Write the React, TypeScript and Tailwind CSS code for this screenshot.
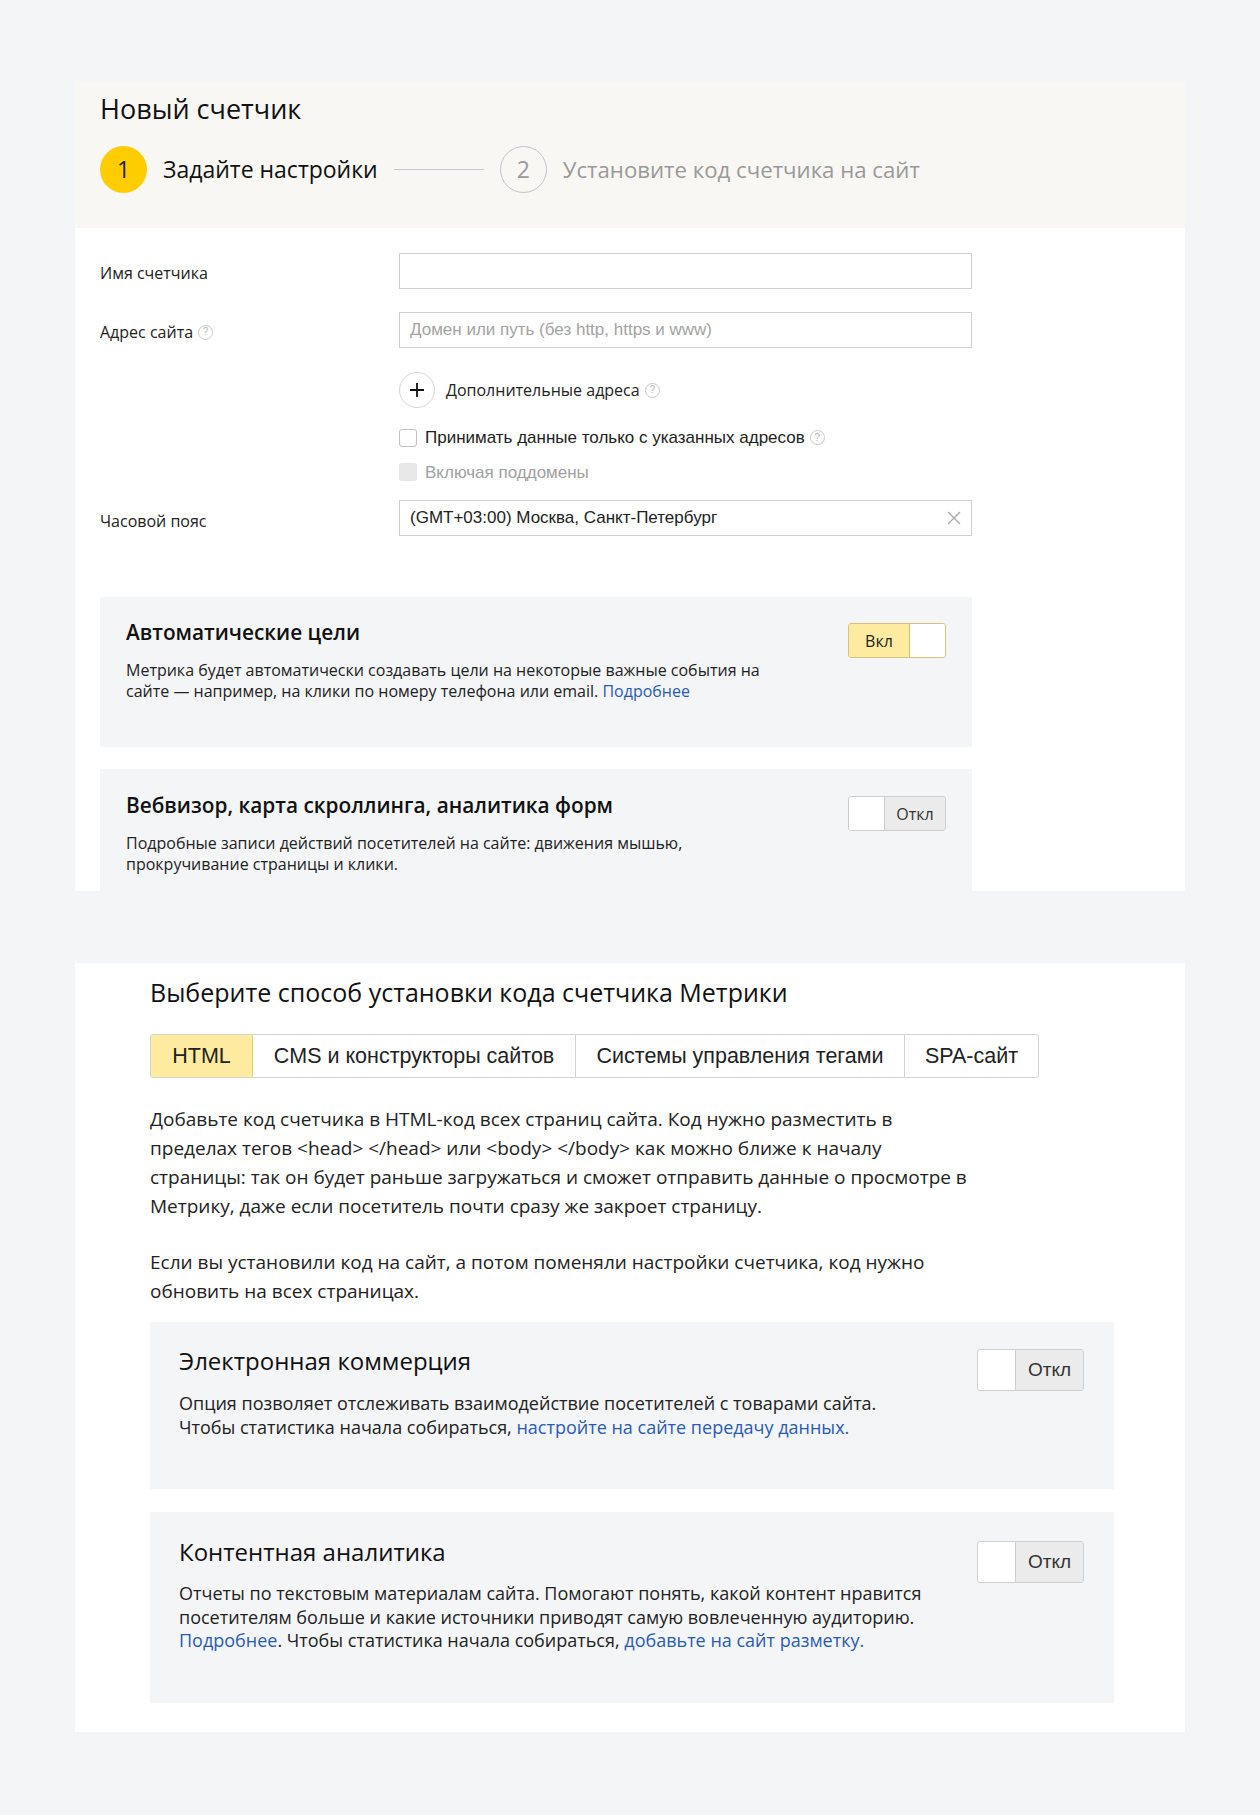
import React from "react";

const ys = "font-['Open_Sans','Noto_Sans',sans-serif]";
const ar = "font-['Liberation_Sans',Arial,sans-serif]";

function Q() {
  return (
    <span className={`inline-flex items-center justify-center w-[15px] h-[15px] rounded-full border border-[#c8c8c8] text-[10px] leading-none text-[#b5b5b5] ${ar} ml-[5px] align-middle`}>
      ?
    </span>
  );
}

function ToggleOn() {
  return (
    <div className="flex w-[98px] h-[35px] rounded-[3px] border border-[#d4c27c] overflow-hidden shrink-0">
      <div className={`flex-1 bg-[#ffeba0] flex items-center justify-center text-[16px] text-[#222] ${ys}`}>Вкл</div>
      <div className="w-[36px] bg-white border-l border-[#d4c27c]" />
    </div>
  );
}

function ToggleOff({ big }: { big?: boolean }) {
  return (
    <div
      className={`flex rounded-[3px] border border-[#cfcfcf] overflow-hidden shrink-0 ${big ? "w-[107px] h-[42px]" : "w-[98px] h-[35px]"}`}
    >
      <div className={`${big ? "w-[38px]" : "w-[36px]"} bg-white border-r border-[#cfcfcf]`} />
      <div
        className={`flex-1 bg-[#ebebeb] flex items-center justify-center text-[#333] ${big ? `text-[19px] ${ar}` : `text-[16px] ${ys}`}`}
      >
        Откл
      </div>
    </div>
  );
}

export default function App() {
  return (
    <div className="min-h-[1815px] bg-[#f3f5f7] pt-[81px] pb-[83px]">
      {/* Card 1 */}
      <div className="ml-[75px] w-[1110px] h-[810px] bg-white overflow-hidden">
        <div className="bg-[#f8f7f4] h-[147px] pl-[25px] pt-[12px]">
          <div className={`text-[27px] leading-[32px] text-[#111] ${ys}`}>Новый счетчик</div>
          <div className="flex items-center mt-[21px]">
            <div className={`w-[47px] h-[47px] rounded-full bg-[#ffcc00] flex items-center justify-center text-[23px] text-[#222] ${ys}`}>1</div>
            <div className={`ml-[16px] text-[23px] text-[#111] ${ys}`}>Задайте настройки</div>
            <div className="w-[90px] h-px bg-[#c9c9c9] mx-[16px]" />
            <div className={`w-[47px] h-[47px] rounded-full border border-[#c4c4c4] flex items-center justify-center text-[23px] text-[#9a9a9a] ${ys}`}>2</div>
            <div className={`ml-[16px] text-[22.2px] text-[#999] ${ys}`}>Установите код счетчика на сайт</div>
          </div>
        </div>

        <div className="pl-[25px] pt-[25px]">
          {/* row 1 */}
          <div className="flex items-center">
            <div className={`w-[299px] text-[16px] text-[#222] ${ys} pt-[4px]`}>Имя счетчика</div>
            <div className="w-[573px] h-[36px] border border-[#d0d0d0] bg-white" />
          </div>
          {/* row 2 */}
          <div className="flex items-center mt-[23px]">
            <div className={`w-[299px] text-[16px] text-[#222] ${ys} pt-[4px] flex items-center`}>
              Адрес сайта <Q />
            </div>
            <div className={`w-[573px] h-[36px] border border-[#d0d0d0] bg-white flex items-center px-[10px] text-[17px] text-[#a3a3a3] ${ar}`}>
              Домен или путь (без http, https и www)
            </div>
          </div>
          {/* extra */}
          <div className="ml-[299px] mt-[24px] flex items-center">
            <div className="w-[36px] h-[36px] rounded-full border border-[#d6d6d6] flex items-center justify-center bg-white">
              <svg width="16" height="16" viewBox="0 0 16 16">
                <path d="M8 1v14M1 8h14" stroke="#111" strokeWidth="1.8" />
              </svg>
            </div>
            <div className={`ml-[11px] text-[16px] text-[#222] ${ys} flex items-center`}>
              Дополнительные адреса <Q />
            </div>
          </div>
          <div className="ml-[299px] mt-[17px] flex items-center">
            <div className="w-[18px] h-[18px] rounded-[3px] border border-[#c2c2c2] bg-white" />
            <div className={`ml-[8px] text-[17px] text-[#222] ${ar} flex items-center`}>
              Принимать данные только с указанных адресов <Q />
            </div>
          </div>
          <div className="ml-[299px] mt-[9px] flex items-center">
            <div className="w-[18px] h-[18px] rounded-[3px] bg-[#e8e8e8]" />
            <div className={`ml-[8px] text-[17px] text-[#a0a0a0] ${ar}`}>Включая поддомены</div>
          </div>
          {/* timezone */}
          <div className="flex items-center mt-[15px]">
            <div className={`w-[299px] text-[16px] text-[#222] ${ys} pt-[6px]`}>Часовой пояс</div>
            <div className={`w-[573px] h-[36px] border border-[#d0d0d0] bg-white flex items-center justify-between pl-[10px] pr-[10px] text-[17px] text-[#222] ${ar}`}>
              <span>(GMT+03:00) Москва, Санкт-Петербург</span>
              <svg width="14" height="14" viewBox="0 0 14 14">
                <path d="M1 1l12 12M13 1L1 13" stroke="#a8a8a8" strokeWidth="1.3" />
              </svg>
            </div>
          </div>

          {/* panel 1 */}
          <div className="mt-[61px] w-[872px] h-[150px] bg-[#f4f5f7] flex justify-between pl-[26px] pr-[26px] pt-[21px]">
            <div>
              <div className={`text-[20.8px] leading-[28px] font-semibold text-[#111] ${ys}`}>Автоматические цели</div>
              <div className={`mt-[14px] text-[16px] leading-[21px] text-[#222] ${ys}`}>
                Метрика будет автоматически создавать цели на некоторые важные события на
                <br />
                сайте — например, на клики по номеру телефона или email.{" "}
                <span className="text-[#2a5bb0]">Подробнее</span>
              </div>
            </div>
            <div className="mt-[5px]">
              <ToggleOn />
            </div>
          </div>

          {/* panel 2 */}
          <div className="mt-[22px] w-[872px] h-[150px] bg-[#f4f5f7] flex justify-between pl-[26px] pr-[26px] pt-[22px]">
            <div>
              <div className={`text-[20.8px] leading-[28px] font-semibold text-[#111] ${ys}`}>
                Вебвизор, карта скроллинга, аналитика форм
              </div>
              <div className={`mt-[14px] text-[16px] leading-[21px] text-[#222] ${ys}`}>
                Подробные записи действий посетителей на сайте: движения мышью,
                <br />
                прокручивание страницы и клики.
              </div>
            </div>
            <div className="mt-[5px]">
              <ToggleOff />
            </div>
          </div>
        </div>
      </div>

      {/* Card 2 */}
      <div className="ml-[75px] mt-[72px] w-[1110px] h-[769px] bg-white pl-[75px] pt-[14px]">
        <div className={`text-[25px] leading-[30px] text-[#111] ${ys}`}>
          Выберите способ установки кода счетчика Метрики
        </div>
        <div className={`mt-[27px] flex w-fit h-[44px] rounded-[3px] border border-[#d3d3d3] overflow-hidden text-[21.5px] text-[#222] ${ar}`}>
          <div className="w-[102px] bg-[#ffeba0] flex items-center justify-center border-r border-[#e2cf85]">HTML</div>
          <div className="w-[323px] flex items-center justify-center border-r border-[#d3d3d3]">CMS и конструкторы сайтов</div>
          <div className="w-[329px] flex items-center justify-center border-r border-[#d3d3d3]">Системы управления тегами</div>
          <div className="w-[133px] flex items-center justify-center">SPA-сайт</div>
        </div>
        <div className={`mt-[27px] text-[19px] leading-[29px] text-[#222] ${ys}`}>
          Добавьте код счетчика в HTML-код всех страниц сайта. Код нужно разместить в
          <br />
          пределах тегов &lt;head&gt; &lt;/head&gt; или &lt;body&gt; &lt;/body&gt; как можно ближе к началу
          <br />
          страницы: так он будет раньше загружаться и сможет отправить данные о просмотре в
          <br />
          Метрику, даже если посетитель почти сразу же закроет страницу.
        </div>
        <div className={`mt-[27px] text-[19px] leading-[29px] text-[#222] ${ys}`}>
          Если вы установили код на сайт, а потом поменяли настройки счетчика, код нужно
          <br />
          обновить на всех страницах.
        </div>

        {/* panel 3 */}
        <div className="mt-[16px] w-[964px] h-[167px] bg-[#f4f5f7] flex justify-between pl-[29px] pr-[30px] pt-[24px]">
          <div>
            <div className={`text-[24px] leading-[30px] text-[#111] ${ys}`}>Электронная коммерция</div>
            <div className={`mt-[15px] text-[18px] leading-[24px] text-[#222] ${ys}`}>
              Опция позволяет отслеживать взаимодействие посетителей с товарами сайта.
              <br />
              Чтобы статистика начала собираться,{" "}
              <span className="text-[#2a5bb0]">настройте на сайте передачу данных.</span>
            </div>
          </div>
          <div className="mt-[3px]">
            <ToggleOff big />
          </div>
        </div>

        {/* panel 4 */}
        <div className="mt-[23px] w-[964px] h-[191px] bg-[#f4f5f7] flex justify-between pl-[29px] pr-[30px] pt-[25px]">
          <div>
            <div className={`text-[24px] leading-[30px] text-[#111] ${ys}`}>Контентная аналитика</div>
            <div className={`mt-[15px] text-[18px] leading-[23.5px] text-[#222] ${ys}`}>
              Отчеты по текстовым материалам сайта. Помогают понять, какой контент нравится
              <br />
              посетителям больше и какие источники приводят самую вовлеченную аудиторию.
              <br />
              <span className="text-[#2a5bb0]">Подробнее</span>. Чтобы статистика начала собираться,{" "}
              <span className="text-[#2a5bb0]">добавьте на сайт разметку.</span>
            </div>
          </div>
          <div className="mt-[4px]">
            <ToggleOff big />
          </div>
        </div>
      </div>
    </div>
  );
}
